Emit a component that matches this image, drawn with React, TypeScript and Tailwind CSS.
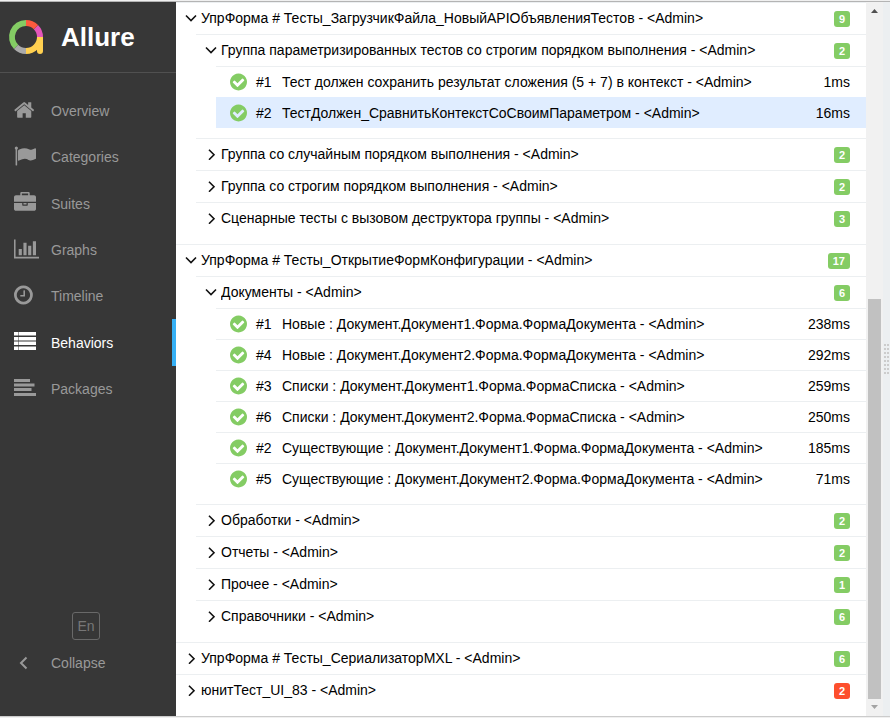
import React from "react";

type Leaf = { n: number; name: string; time: string; selected?: boolean };
type Group = { name: string; count: number; failed?: boolean; groups?: Group[]; leaves?: Leaf[] };

const tree: Group[] = [
  {
    name: "УпрФорма # Тесты_ЗагрузчикФайла_НовыйAPIОбъявленияТестов - <Admin>",
    count: 9,
    groups: [
      {
        name: "Группа параметризированных тестов со строгим порядком выполнения - <Admin>",
        count: 2,
        leaves: [
          { n: 1, name: "Тест должен сохранить результат сложения (5 + 7) в контекст - <Admin>", time: "1ms" },
          { n: 2, name: "ТестДолжен_СравнитьКонтекстСоСвоимПараметром - <Admin>", time: "16ms", selected: true },
        ],
      },
      { name: "Группа со случайным порядком выполнения - <Admin>", count: 2 },
      { name: "Группа со строгим порядком выполнения - <Admin>", count: 2 },
      { name: "Сценарные тесты с вызовом деструктора группы - <Admin>", count: 3 },
    ],
  },
  {
    name: "УпрФорма # Тесты_ОткрытиеФормКонфигурации - <Admin>",
    count: 17,
    groups: [
      {
        name: "Документы - <Admin>",
        count: 6,
        leaves: [
          { n: 1, name: "Новые : Документ.Документ1.Форма.ФормаДокумента - <Admin>", time: "238ms" },
          { n: 4, name: "Новые : Документ.Документ2.Форма.ФормаДокумента - <Admin>", time: "292ms" },
          { n: 3, name: "Списки : Документ.Документ1.Форма.ФормаСписка - <Admin>", time: "259ms" },
          { n: 6, name: "Списки : Документ.Документ2.Форма.ФормаСписка - <Admin>", time: "250ms" },
          { n: 2, name: "Существующие : Документ.Документ1.Форма.ФормаДокумента - <Admin>", time: "185ms" },
          { n: 5, name: "Существующие : Документ.Документ2.Форма.ФормаДокумента - <Admin>", time: "71ms" },
        ],
      },
      { name: "Обработки - <Admin>", count: 2 },
      { name: "Отчеты - <Admin>", count: 2 },
      { name: "Прочее - <Admin>", count: 1 },
      { name: "Справочники - <Admin>", count: 6 },
    ],
  },
  { name: "УпрФорма # Тесты_СериализаторMXL - <Admin>", count: 6 },
  { name: "юнитТест_UI_83 - <Admin>", count: 2, failed: true },
];

const circle =
  "q0 209-103 385.5t-279.5 279.5-385.5 103-385.5-103-279.5-279.5-103-385.5 103-385.5 279.5-279.5 385.5-103 385.5 103 279.5 279.5 103 385.5z";

const icons = {
  home: {
    box: "64 0 1664 1792",
    d: "M1472 992v480q0 26-19 45t-45 19h-384v-384h-256v384h-384q-26 0-45-19t-19-45v-480q0-1 .5-3t.5-3l575-474 575 474q1 2 1 6zm223-69l-62 74q-8 9-21 11h-3q-13 0-21-7l-692-577-692 577q-12 8-24 7-13-2-21-11l-62-74q-8-10-7-23.5t11-21.5l719-599q32-26 76-26t76 26l244 204v-195q0-14 9-23t23-9h192q14 0 23 9t9 23v408l219 182q10 8 11 21.5t-7 23.5z",
  },
  flag: {
    box: "0 0 1792 1792",
    d: "M320 256q0 72-64 110v1266q0 13-9.5 22.5t-22.5 9.5h-64q-13 0-22.5-9.5t-9.5-22.5v-1266q-64-38-64-110 0-53 37.5-90.5t90.5-37.5 90.5 37.5 37.5 90.5zm1472 64v763q0 25-12.5 38.5t-39.5 27.5q-215 116-369 116-61 0-123.5-22t-108.5-48-115.5-48-142.5-22q-192 0-464 146-17 9-33 9-26 0-45-19t-19-45v-742q0-32 31-55 21-14 79-43 236-120 421-120 107 0 200 29t219 88q38 19 88 19 54 0 117.5-21t110-47 88-47 54.5-21q26 0 45 19t19 45z",
  },
  briefcase: {
    box: "0 0 1792 1792",
    d: "M640 256h512v-128h-512v128zm1152 640v480q0 66-47 113t-113 47h-1472q-66 0-113-47t-47-113v-480h672v160q0 26 19 45t45 19h320q26 0 45-19t19-45v-160h672zm-768 0v128h-256v-128h256zm768-480v384h-1792v-384q0-66 47-113t113-47h352v-160q0-40 28-68t68-28h576q40 0 68 28t28 68v160h352q66 0 113 47t47 113z",
  },
  chart: {
    box: "0 0 2048 1792",
    d: "M640 896v512h-256v-512h256zm384-512v1024h-256v-1024h256zm1024 1152v128h-2048v-1536h128v1408h1920zm-640-896v768h-256v-768h256zm384-384v1152h-256v-1152h256z",
  },
  clock: {
    box: "128 0 1536 1792",
    d:
      "M1024 544v448q0 14-9 23t-23 9h-320q-14 0-23-9t-9-23v-64q0-14 9-23t23-9h224v-352q0-14 9-23t23-9h64q14 0 23 9t9 23zm416 352q0-148-73-273t-198-198-273-73-273 73-198 198-73 273 73 273 198 198 273 73 273-73 198-198 73-273zm224 0" +
      circle,
  },
  list: {
    box: "0 0 22 22",
    d: "M0 1h4v3.500h-4zM4.500 1h17.500v3.500h-17.500zM0 6h4v3.500h-4zM4.500 6h17.500v3.500h-17.500zM0 10.500h4v3.500h-4zM4.500 10.500h17.500v3.500h-17.500zM0 15.500h4v3.500h-4zM4.500 15.500h17.500v3.500h-17.500z",
  },
  align: {
    box: "0 0 22 22",
    d: "M0 2h16v3h-16zM0 6.500h20.500v3h-20.500zM0 11h17.500v3h-17.500zM0 16h22v3h-22z",
  },
};

type IconName = keyof typeof icons;

const nav: { label: string; icon: IconName; active?: boolean }[] = [
  { label: "Overview", icon: "home" },
  { label: "Categories", icon: "flag" },
  { label: "Suites", icon: "briefcase" },
  { label: "Graphs", icon: "chart" },
  { label: "Timeline", icon: "clock" },
  { label: "Behaviors", icon: "list", active: true },
  { label: "Packages", icon: "align" },
];

function Icon({ name }: { name: IconName }) {
  return (
    <svg viewBox={icons[name].box} className="h-[22px] w-auto shrink-0" fill="currentColor" aria-hidden="true">
      <path d={icons[name].d} />
    </svg>
  );
}

function Logo() {
  return (
    <svg viewBox="0 0 36 36" className="size-9" fill="none" strokeWidth="6" aria-hidden="true">
      <path d="M8.100 27.900A14 14 0 0 1 18 4" stroke="#84cc64" />
      <path d="M18 32A14 14 0 0 1 8.100 27.900" stroke="#aaaaaa" />
      <path d="M32 18A14 14 0 0 1 18 32" stroke="#ffd050" />
      <path d="M29 18H35V32A3 3 0 0 1 29 32z" fill="#ffd050" />
      <path d="M27.900 8.100A14 14 0 0 1 32 18" stroke="#e456ba" />
      <path d="M18 4A14 14 0 0 1 27.900 8.100" stroke="#fd5a3e" />
    </svg>
  );
}

function Chevron({ open }: { open: boolean }) {
  return (
    <svg viewBox="0 0 12 12" className="size-3 shrink-0" fill="none" stroke="#111" strokeWidth="1.6" aria-hidden="true">
      <path d={open ? "M1 3.500L6 8.500L11 3.500" : "M4 1.700L9 6.700L4 11.700"} />
    </svg>
  );
}

function LeafRow({ leaf }: { leaf: Leaf }) {
  return (
    <a
      href="#"
      className={
        leaf.selected
          ? "flex h-[31px] items-center border-t border-[#e0edff] bg-[#e0edff] pr-4 pl-3.5"
          : "flex h-[31px] items-center border-t border-[#eceff1] pr-4 pl-3.5"
      }
    >
      <svg viewBox="128 0 1536 1792" className="h-5 w-[17px] shrink-0" fill="#84cc64" aria-hidden="true">
        <path
          d={
            "M1412 734q0-28-18-46l-91-90q-19-19-45-19t-45 19l-408 407-226-226q-19-19-45-19t-45 19l-91 90q-18 18-18 46 0 27 18 45l362 362q19 19 45 19 27 0 46-19l543-543q18-18 18-45zm252 162" +
            circle
          }
        />
      </svg>
      <span className="ml-[9px] w-[26px] shrink-0">#{leaf.n}</span>
      <span className="min-w-0 flex-1 truncate">{leaf.name}</span>
      <span>{leaf.time}</span>
    </a>
  );
}

function GroupNode({ group }: { group: Group }) {
  const open = Boolean(group.groups || group.leaves);
  return (
    <li>
      <button
        type="button"
        aria-expanded={open}
        className="flex h-8 w-full cursor-pointer items-center gap-1 border-t border-[#eceff1] pr-4 pb-0.5 pl-[9px] text-left"
      >
        <Chevron open={open} />
        <span className="min-w-0 flex-1 truncate">{group.name}</span>
        <span
          className={
            group.failed
              ? "mt-0.5 h-4 rounded-[3px] bg-[#fd4f2d] px-[5px] text-[11px] leading-4 font-bold text-white"
              : "mt-0.5 h-4 rounded-[3px] bg-[#84cc64] px-[5px] text-[11px] leading-4 font-bold text-white"
          }
        >
          {group.count}
        </span>
      </button>
      {group.groups && (
        <ul className="pb-2.5 pl-5">
          {group.groups.map((g) => (
            <GroupNode key={g.name} group={g} />
          ))}
        </ul>
      )}
      {group.leaves && (
        <div className="pb-2.5 pl-5">
          {group.leaves.map((l) => (
            <LeafRow key={l.n} leaf={l} />
          ))}
        </div>
      )}
    </li>
  );
}

export default function App() {
  return (
    <div className="flex h-screen flex-col border-b border-[#f0f0f0] bg-white font-['Liberation_Sans',Arial,sans-serif] text-sm text-black">
      <div className="h-0.5 shrink-0 border-b border-[#b4b4b4] bg-[#f0f0f0]" />
      <div className="flex min-h-0 flex-1 border-b border-[#cccccc]">
        <aside className="flex w-44 shrink-0 flex-col bg-[#373737] text-[#999]">
          <div className="flex h-[71px] shrink-0 items-center gap-[17px] border-b border-[#505050] pl-2">
            <Logo />
            <span className="text-[26px] leading-8 font-bold text-white">Allure</span>
          </div>
          <nav className="mt-[15px] grid h-[324px] shrink-0 grid-rows-7">
            {nav.map((item) => (
              <a
                key={item.label}
                href="#"
                className={
                  item.active
                    ? "flex items-center border-r-4 border-[#36b0f5] pl-3.5 text-white"
                    : "flex items-center pl-3.5"
                }
              >
                <span className="w-[37px] pb-0.5">
                  <Icon name={item.icon} />
                </span>
                {item.label}
              </a>
            ))}
          </nav>
          <div className="mt-auto flex flex-col pb-[30px]">
            <button type="button" className="ml-[72px] size-7 rounded-[3px] border border-[#696969] text-[#777]">
              En
            </button>
            <button type="button" className="flex h-[46px] items-center pl-[19px] text-left">
              <svg viewBox="0 0 12 14" className="mr-5 h-3.5 w-3" fill="none" stroke="currentColor" strokeWidth="2" aria-hidden="true">
                <path d="M7.500 1.500L2 7L7.500 12.500" />
              </svg>
              Collapse
            </button>
          </div>
        </aside>
        <main className="min-w-0 flex-1 overflow-hidden">
          <ul>
            {tree.map((g) => (
              <GroupNode key={g.name} group={g} />
            ))}
          </ul>
        </main>
        <div className="flex w-[17px] shrink-0 flex-col items-center justify-between bg-[#f1f1f1]">
          <svg viewBox="0 0 17 17" className="size-[17px]" fill="#505050" aria-hidden="true">
            <path d="M5 11L8.500 7L12 11z" />
          </svg>
          <div className="mt-auto h-[400px] w-[13px] bg-[#c1c1c1]" />
          <svg viewBox="0 0 17 17" className="size-[17px]" fill="#a3a3a3" aria-hidden="true">
            <path d="M5 6L8.500 10L12 6z" />
          </svg>
        </div>
        <div className="flex w-[7px] shrink-0 items-center justify-end bg-[#eceff1]">
          <div className="grid grid-cols-2 gap-x-px gap-y-0.5 pr-px">
            {Array.from({ length: 16 }, (_, i) => (
              <span key={i} className="size-0.5 bg-[#cccccc]" />
            ))}
          </div>
        </div>
      </div>
    </div>
  );
}
